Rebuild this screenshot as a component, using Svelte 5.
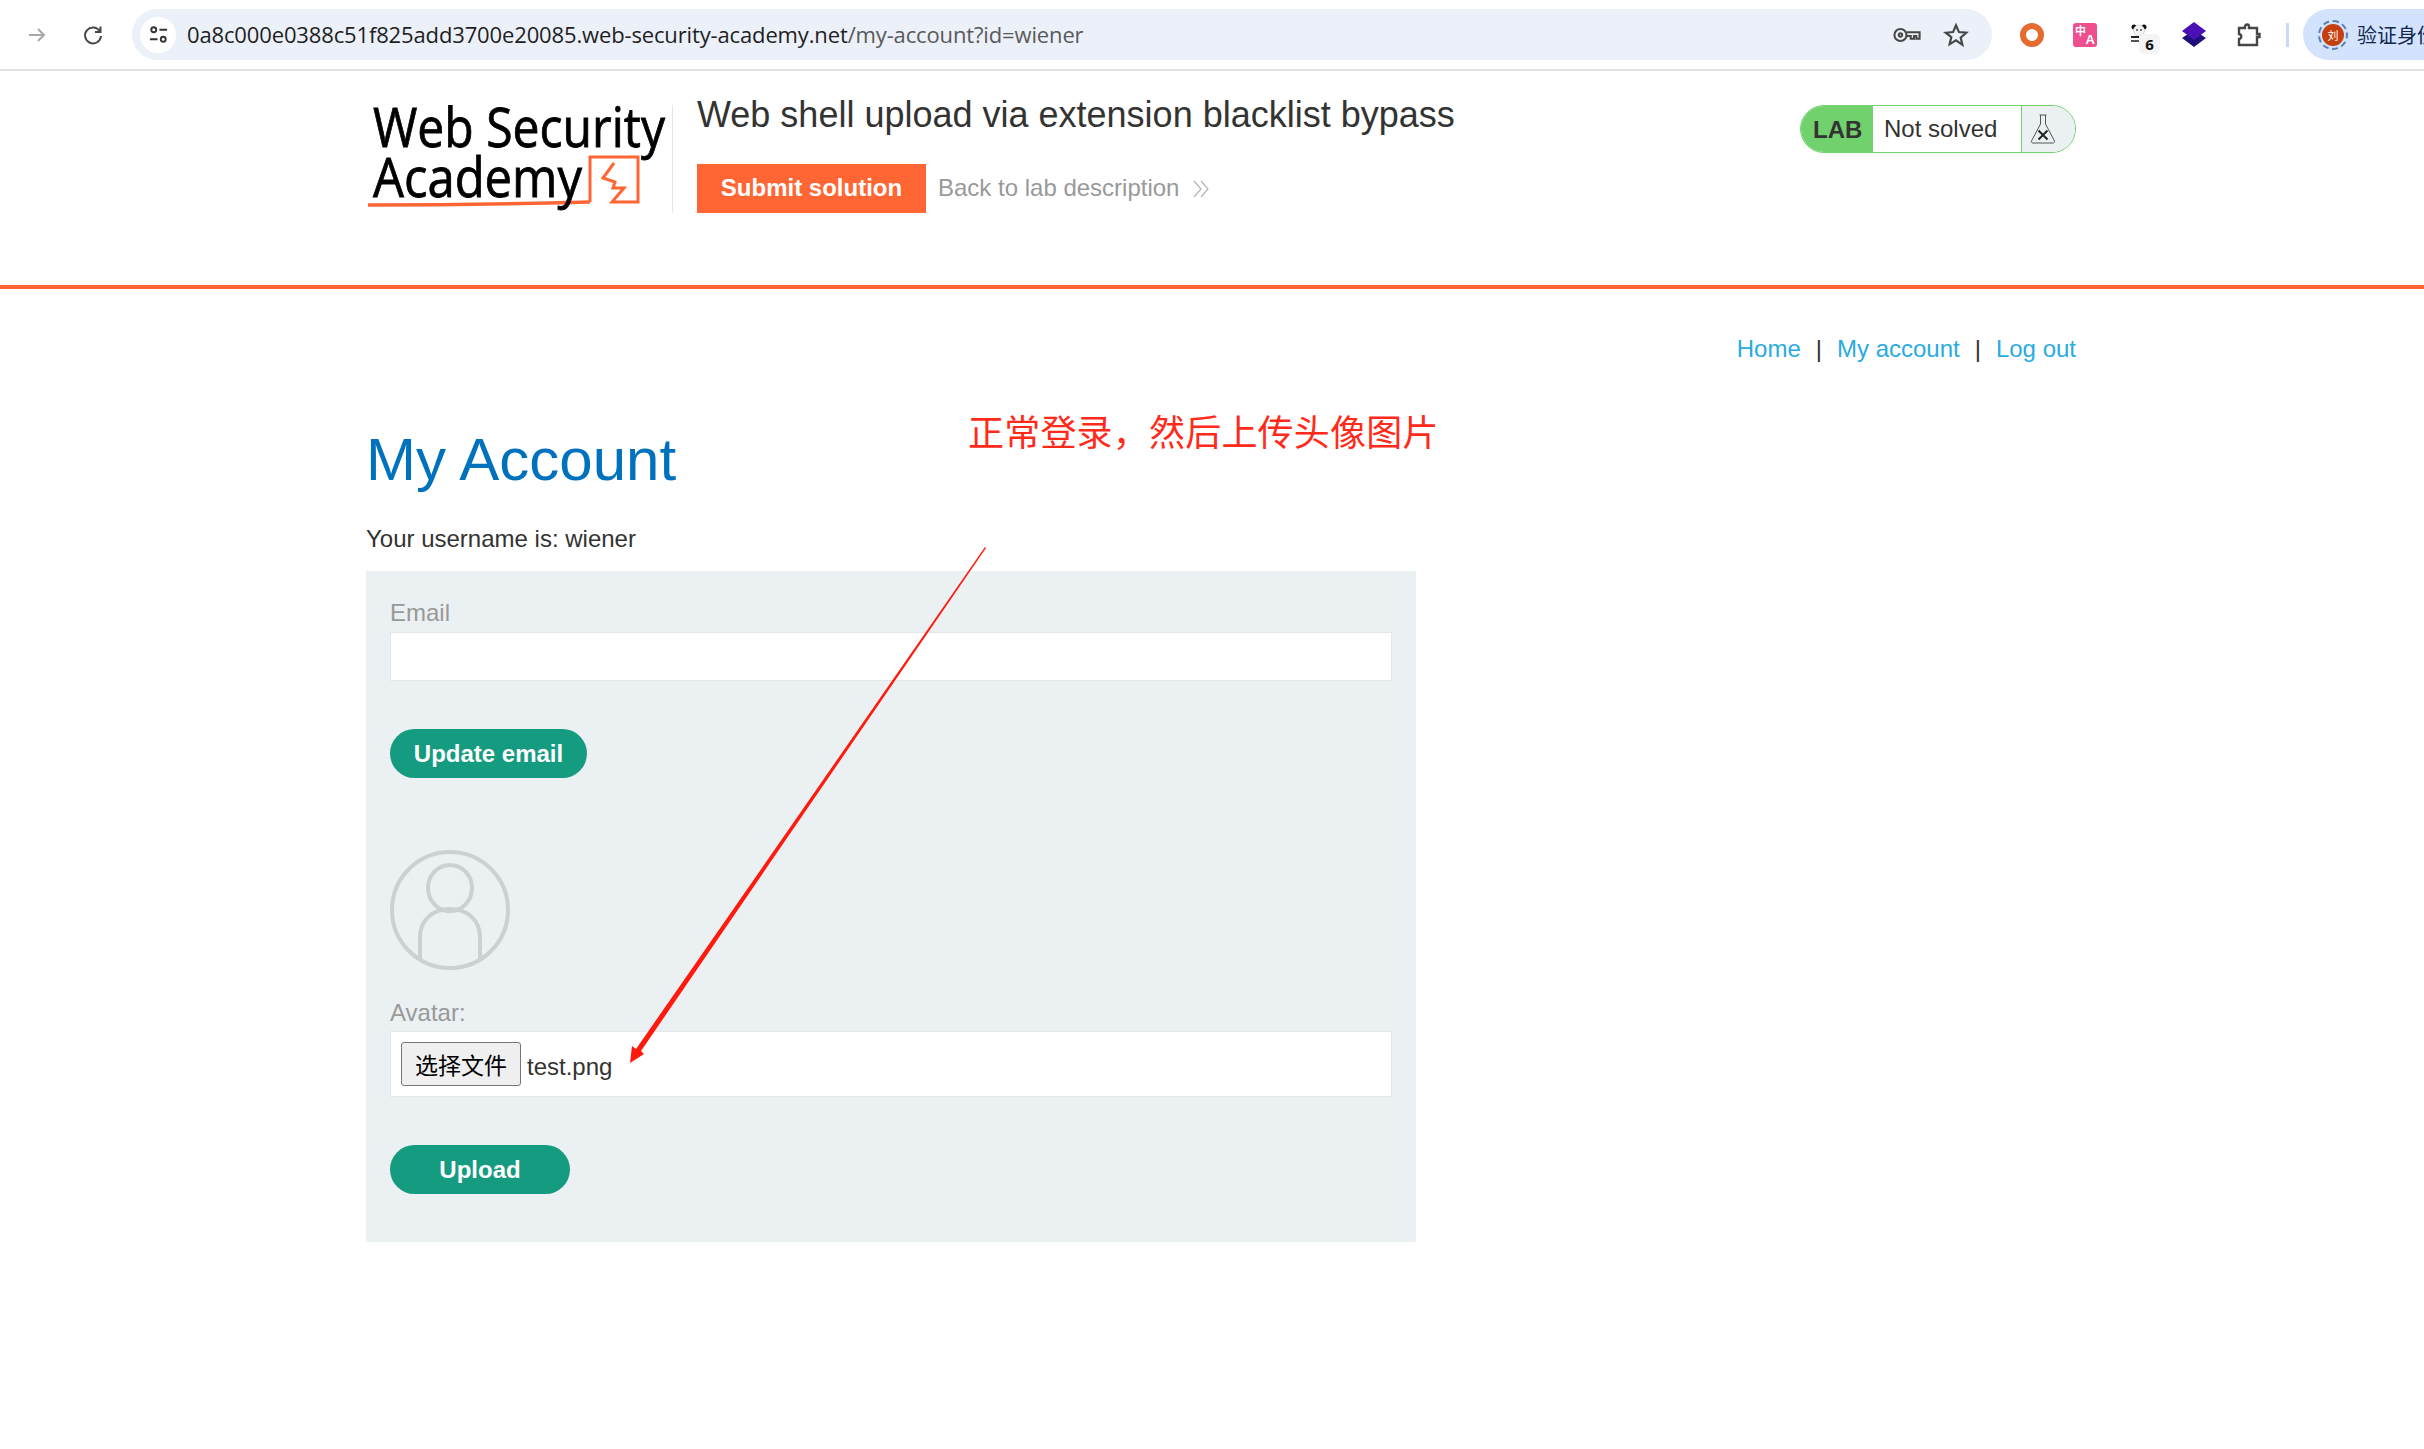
<script>
  const navLinks = ["Home", "My account", "Log out"];
</script>

<div class="page">
  <div class="chrome">
    <svg class="tb-icon go-back" viewBox="0 0 24 24"><path d="M4 12h15M13 6l6 6-6 6" /></svg>
    <svg class="tb-icon reload" viewBox="0 0 24 24"><path d="M19 8.500A8 8 0 1 0 20 13M19.500 3.500v5.500h-5.500" /></svg>
    <div class="omnibox">
      <span class="tune">
        <svg viewBox="0 0 20 20"><circle cx="5" cy="5" r="2.600" /><path d="M11 5h8M1 15h8" /><circle cx="15" cy="15" r="2.600" /></svg>
      </span>
      <span class="url">0a8c000e0388c51f825add3700e20085.web-security-academy.net<span class="path">/my-account?id=wiener</span></span>
      <svg class="key" viewBox="0 0 30 20"><circle cx="8" cy="10" r="6.500" /><circle cx="8" cy="10" r="1.800" /><path d="M14.500 7h14v7h-3.500v-3h-2.500v3h-3.500v-3h-4.500" /></svg>
      <svg class="star" viewBox="0 0 24 24"><path d="M12 3l2.700 6.300 6.800.6-5.200 4.500 1.600 6.700L12 17l-5.900 3.600 1.600-6.700L2.500 9.900l6.800-.6z" /></svg>
    </div>
    <div class="exts">
      <span class="ring"></span>
      <span class="translate"><span class="zh">中</span><span class="a">A</span></span>
      <span class="panda">
        <svg viewBox="0 0 16 19">
          <circle cx="3" cy="3" r="2.500" fill="#111" />
          <circle cx="13" cy="3" r="2.500" fill="#111" />
          <circle cx="8" cy="6.500" r="5.500" fill="#f2f2f2" stroke="#bbb" stroke-width=".5" />
          <circle cx="6" cy="6" r="1" fill="#555" />
          <circle cx="10" cy="6" r="1" fill="#555" />
          <rect x="0" y="12" width="8" height="2" fill="#222" />
          <rect x="0" y="16" width="9" height="2" fill="#555" />
        </svg>
        <b>6</b>
      </span>
      <svg class="layers" viewBox="0 0 24 25"><path d="M12 8l12 8-12 9-12-9z" fill="#1f0f7a" /><path d="M12 0l12 9-12 9L0 9z" fill="#4a10b5" /></svg>
      <svg class="puzzle" viewBox="0 0 24 24"><path d="M2 5h6V3.500a2 2 0 0 1 4 0V5h8v6h2.500v3H20v8H2v-6c3-.5 3-4.500 0-5z" /></svg>
      <span class="divider"></span>
    </div>
    <div class="profile">
      <span class="avatar"><span>刘</span></span>
      <span class="verify">验证身份</span>
    </div>
  </div>

  <header class="lab-head">
    <div class="wrap head-row">
      <svg class="logo" viewBox="0 4 304 108">
        <path class="swoosh" d="M0 104c70 0 150-1 222-3" />
        <path class="box" d="M222 101V56h48v45h-26l12-14h-11l2-6-12-4 11-15" />
        <text x="5" y="46" textLength="292" lengthAdjust="spacingAndGlyphs">Web Security</text>
        <text x="5" y="96" textLength="209" lengthAdjust="spacingAndGlyphs">Academy</text>
      </svg>
      <div class="lab-title">
        <h1>Web shell upload via extension blacklist bypass</h1>
        <div class="lab-actions">
          <button class="submit">Submit solution</button>
          <span class="back-link">Back to lab description</span>
          <svg class="chev" viewBox="0 0 18 20"><path d="M2 2l7 8-7 8M9 2l7 8-7 8" /></svg>
        </div>
      </div>
      <div class="status">
        <span class="lab">LAB</span>
        <span class="state">Not solved</span>
        <span class="flask">
          <svg viewBox="0 0 26 32"><path d="M9.500 2h7M10.500 2v9L1.500 28a1.500 1.500 0 0 0 1.500 2h20a1.500 1.500 0 0 0 1.500-2L15.500 11V2" /><path class="x" d="M8.500 17.500l9 9M17.500 17.500l-9 9" /></svg>
        </span>
      </div>
    </div>
  </header>

  <main class="wrap">
    <nav>
      {#each navLinks as link, i}
        {#if i > 0}<span class="sep">|</span>{/if}
        <span class="link">{link}</span>
      {/each}
    </nav>
    <h2>My Account</h2>
    <p class="who">Your username is: wiener</p>
    <div class="panel">
      <label class="first" for="email">Email</label>
      <input id="email" type="text" />
      <button class="pill update">Update email</button>
      <svg class="user" viewBox="0 0 120 120">
        <circle cx="60" cy="60" r="58" />
        <ellipse cx="60" cy="38" rx="22" ry="23" />
        <path d="M30 109V87c0-17 13-28 30-28s30 11 30 28v22" />
      </svg>
      <label for="file">Avatar:</label>
      <div class="file" id="file">
        <span class="choose">选择文件</span>
        <span class="fname">test.png</span>
      </div>
      <button class="pill upload">Upload</button>
    </div>
  </main>

  <div class="note">正常登录，然后上传头像图片</div>
  <svg class="arrow" viewBox="0 0 2424 1449">
    <path d="M985 547L986 548 641 1051 644 1054 630 1063 632 1046 636 1049z" />
  </svg>
</div>

<style>
  :global(body) {
    background: #fff;
    font-family: "Liberation Sans", Arial, sans-serif;
    color: #333332;
  }
  .page {
    position: relative;
    width: 2424px;
    height: 1449px;
    overflow: hidden;
  }
  .wrap {
    width: 1711px;
    margin-left: 366px;
  }

  /* browser bar */
  .chrome {
    display: flex;
    align-items: center;
    height: 69px;
    border-bottom: 2px solid #e3e3e3;
  }
  .tb-icon {
    width: 24px;
    height: 24px;
    fill: none;
    stroke-width: 2;
    flex-shrink: 0;
  }
  .go-back {
    margin-left: 25px;
    stroke: #a8a8a8;
  }
  .reload {
    margin-left: 32px;
    stroke: #474747;
  }
  .omnibox {
    display: flex;
    align-items: center;
    flex-shrink: 0;
    width: 1860px;
    height: 51px;
    margin-left: 27px;
    border-radius: 26px;
    background: #ebf0f9;
  }
  .tune {
    display: flex;
    align-items: center;
    justify-content: center;
    width: 36px;
    height: 36px;
    margin-left: 8px;
    border-radius: 50%;
    background: #fff;
  }
  .tune svg {
    width: 19px;
    height: 19px;
    fill: none;
    stroke: #333;
    stroke-width: 2;
  }
  .url {
    margin: 0 0 2px 11px;
    font: 22px "Open Sans", sans-serif;
    letter-spacing: -0.14px;
    color: #1f1f1f;
    white-space: nowrap;
  }
  .path {
    color: #5a5a5a;
  }
  .key {
    width: 28px;
    height: 20px;
    margin-left: auto;
    fill: none;
    stroke: #474747;
    stroke-width: 2.200;
  }
  .star {
    width: 26px;
    height: 26px;
    margin: 0 23px 0 22px;
    fill: none;
    stroke: #474747;
    stroke-width: 2;
  }
  .exts {
    display: flex;
    align-items: center;
    height: 51px;
    flex-shrink: 0;
  }
  .ring {
    width: 12px;
    height: 12px;
    margin-left: 28px;
    border: 6px solid #e56b2f;
    border-radius: 50%;
  }
  .translate {
    position: relative;
    width: 24px;
    height: 24px;
    margin-left: 29px;
    border-radius: 3px;
    background: #ee4f8e;
    color: #fff;
  }
  .zh {
    position: absolute;
    left: 2px;
    top: 1px;
    font: 700 11px/12px "Noto Sans CJK SC", sans-serif;
  }
  .a {
    position: absolute;
    right: 2px;
    bottom: 1px;
    font: 700 13px/13px "Liberation Sans", sans-serif;
  }
  .panda {
    position: relative;
    display: block;
    width: 16px;
    height: 19px;
    margin-left: 34px;
    margin-top: -2px;
  }
  .panda svg {
    display: block;
    width: 16px;
    height: 19px;
  }
  .panda b {
    position: absolute;
    left: 8px;
    top: 10px;
    width: 21px;
    height: 20px;
    border-radius: 5px;
    background: #f4f4f4;
    color: #111;
    font: 700 15px/20px "Open Sans", sans-serif;
    text-align: center;
  }
  .layers {
    width: 24px;
    height: 25px;
    margin-left: 35px;
  }
  .puzzle {
    width: 24px;
    height: 24px;
    margin-left: 31px;
    fill: none;
    stroke: #474747;
    stroke-width: 2.400;
  }
  .divider {
    width: 3px;
    height: 24px;
    margin-left: 25px;
    background: #c9daf6;
  }
  .profile {
    display: flex;
    flex: 1;
    align-items: center;
    height: 51px;
    margin-left: 14px;
    padding-left: 15px;
    overflow: hidden;
    border-radius: 26px 0 0 26px;
    background: #d3e3fd;
  }
  .avatar {
    display: flex;
    align-items: center;
    justify-content: center;
    width: 30px;
    height: 30px;
    flex-shrink: 0;
    box-sizing: border-box;
    border: 2px dashed #5b7fb5;
    border-radius: 50%;
  }
  .avatar span {
    width: 22px;
    height: 22px;
    border-radius: 50%;
    background: #c5400f;
    color: #fff;
    font: 11px/22px "Noto Sans CJK SC", sans-serif;
    text-align: center;
  }
  .verify {
    margin-left: 9px;
    font: 20px "Noto Sans CJK SC", sans-serif;
    color: #12284d;
    white-space: nowrap;
  }

  /* lab banner */
  .lab-head {
    height: 214px;
    border-bottom: 4px solid #ff6633;
  }
  .head-row {
    display: flex;
    align-items: flex-start;
  }
  .logo {
    width: 304px;
    height: 108px;
    margin: 34px 0 0 2px;
    flex-shrink: 0;
    border-right: 1px solid #e6e6e6;
  }
  .logo text {
    font: 500 54px "Open Sans", sans-serif;
    fill: #000;
    stroke: #000;
    stroke-width: 0.8px;
  }
  .swoosh {
    fill: none;
    stroke: #ff6633;
    stroke-width: 3.500;
  }
  .box {
    fill: none;
    stroke: #ff6633;
    stroke-width: 3;
  }
  .lab-title {
    margin-left: 24px;
    padding-top: 22px;
  }
  h1 {
    margin: 0;
    font-size: 36px;
    font-weight: 400;
    line-height: 44px;
    color: #333332;
    white-space: nowrap;
  }
  .lab-actions {
    display: flex;
    align-items: center;
    margin-top: 27px;
  }
  .submit {
    width: 229px;
    height: 49px;
    padding: 0 0 2px;
    border: 0;
    background: #ff6633;
    color: #fff;
    font: 700 24px "Liberation Sans", sans-serif;
  }
  .back-link {
    margin: 0 0 2px 12px;
    font-size: 24px;
    color: #999;
  }
  .chev {
    width: 18px;
    height: 20px;
    margin-left: 13px;
    fill: none;
    stroke: #b3b3b3;
    stroke-width: 1.200;
  }
  .status {
    display: flex;
    height: 48px;
    width: 276px;
    margin: 34px 1px 0 auto;
    box-sizing: border-box;
    border: 1px solid #70d16d;
    border-radius: 24px;
    overflow: hidden;
    flex-shrink: 0;
  }
  .lab {
    width: 72px;
    padding-left: 12px;
    box-sizing: border-box;
    background: #70d16d;
    font: 700 24px/47px "Liberation Sans", sans-serif;
  }
  .state {
    width: 149px;
    padding-left: 11px;
    box-sizing: border-box;
    font-size: 24px;
    line-height: 45px;
    border-right: 1px solid #70d16d;
  }
  .flask {
    display: flex;
    flex: 1;
    align-items: center;
    justify-content: center;
    background: #ebf0f2;
    padding-right: 11px;
  }
  .flask svg {
    width: 26px;
    height: 32px;
    fill: none;
    stroke: #555;
    stroke-width: 1;
  }
  .flask .x {
    stroke-width: 2;
    stroke: #222;
  }

  /* page content */
  nav {
    display: flex;
    justify-content: flex-end;
    gap: 15px;
    margin: 45px 1px 0 0;
    font-size: 24px;
    line-height: 30px;
  }
  .link {
    color: #29abe2;
  }
  h2 {
    margin: 60px 0 0;
    font-size: 60px;
    font-weight: 400;
    line-height: 72px;
    color: #0071bc;
  }
  .who {
    margin: 28px 0 0;
    font-size: 24px;
    line-height: 30px;
  }
  .panel {
    display: flex;
    flex-direction: column;
    align-items: flex-start;
    width: 1050px;
    height: 671px;
    margin-top: 17px;
    padding: 0 24px;
    box-sizing: border-box;
    background: #ebf0f2;
  }
  label {
    font-size: 24px;
    line-height: 32px;
    color: #999;
  }
  label.first {
    margin-top: 26px;
  }
  input,
  .file {
    width: 1002px;
    box-sizing: border-box;
    border: 1px solid #e6e6e6;
    background: #fff;
  }
  input {
    height: 49px;
    margin-top: 3px;
  }
  .pill {
    height: 49px;
    padding: 0;
    border: 0;
    border-radius: 25px;
    background: #159c80;
    color: #fff;
    font: 700 24px "Liberation Sans", sans-serif;
  }
  .update {
    width: 197px;
    margin-top: 48px;
  }
  .user {
    width: 120px;
    height: 120px;
    margin-top: 72px;
    fill: none;
    stroke: #cbd0d1;
    stroke-width: 4;
  }
  .user + label {
    margin-top: 27px;
  }
  .file {
    display: flex;
    align-items: center;
    height: 66px;
    margin-top: 2px;
    padding-left: 10px;
  }
  .choose {
    width: 120px;
    height: 44px;
    box-sizing: border-box;
    border: 1px solid #767676;
    border-radius: 3px;
    background: #efefef;
    color: #000;
    font: 23px/42px "Noto Sans CJK SC", sans-serif;
    text-align: center;
  }
  .fname {
    margin: 6px 0 0 6px;
    font-size: 24px;
  }
  .upload {
    width: 180px;
    margin-top: 48px;
  }

  /* screenshot annotation */
  .note {
    position: absolute;
    left: 968px;
    top: 403px;
    font: 36px/54px "Noto Sans CJK SC", sans-serif;
    letter-spacing: 0.2px;
    color: #ff2a1a;
    white-space: nowrap;
  }
  .arrow {
    position: absolute;
    left: 0;
    top: 0;
    width: 2424px;
    height: 1449px;
    fill: #ff1a0d;
    pointer-events: none;
  }
</style>
